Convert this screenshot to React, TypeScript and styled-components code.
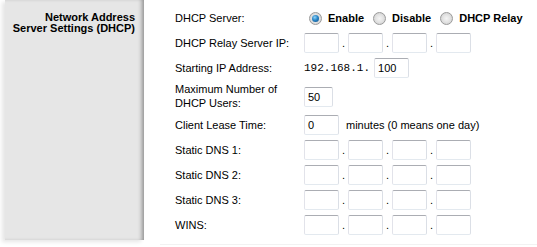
import React from "react";
import styled, { createGlobalStyle } from "styled-components";

const GlobalStyle = createGlobalStyle`
  html, body {
    margin: 0;
    padding: 0;
    background: #ffffff;
  }
  body {
    font-family: "Liberation Sans", Arial, sans-serif;
    font-size: 11px;
    color: #000;
  }
`;

const Page = styled.div`
  display: flex;
  width: 537px;
  height: 247px;
  overflow: hidden;
`;

const Sidebar = styled.div`
  width: 139px;
  margin: 0 0 7px 5px;
  background: #e6e6e6;
  box-shadow: -3px 2px 4px 0 #e6e6e6, inset -4px 0 4px -2px rgba(0, 0, 0, 0.38);
  text-align: right;
`;

const SectionTitle = styled.div`
  padding: 12px 9px 0 0;
  font-weight: bold;
  font-size: 11px;
  line-height: 11px;
`;

const Content = styled.div`
  flex: 1;
  padding-left: 16px;
`;

const Form = styled.div`
  display: grid;
  grid-template-columns: 129px 1fr;
  row-gap: 5px;
  align-items: center;
  padding: 8px 0 9px 15px;
  border-bottom: 1px solid #f2f2f2;
`;

const Label = styled.div<{ $tall?: boolean }>`
  line-height: ${(p) => (p.$tall ? "13.5px" : "20px")};
`;

const Field = styled.div`
  display: flex;
  align-items: center;
  height: ${(p: { $h?: number }) => (p.$h ? `${p.$h}px` : "20px")};
`;

const RadioGroup = styled.div`
  display: flex;
  align-items: center;
  gap: 9px;
  padding-left: 5px;
`;

const RadioOption = styled.label`
  display: flex;
  align-items: center;
  font-weight: bold;
`;

const Radio = styled.span<{ $checked?: boolean }>`
  position: relative;
  width: 13px;
  height: 13px;
  margin-right: 6px;
  box-sizing: border-box;
  border-radius: 50%;
  border: 1px solid #9a9a9a;
  background: radial-gradient(circle at 50% 50%, #f4f4f4 0, #e4e4e4 45%, #c9c9c9 100%);

  &::after {
    content: "";
    display: ${(p) => (p.$checked ? "block" : "none")};
    position: absolute;
    left: 2px;
    top: 2px;
    width: 7px;
    height: 7px;
    border-radius: 50%;
    background: radial-gradient(circle at 40% 35%, #8fd3f8 0, #2a86c7 45%, #0d4a82 100%);
  }
`;

const TextBox = styled.div<{ $w?: number }>`
  box-sizing: border-box;
  width: ${(p) => p.$w ?? 35}px;
  height: 20px;
  padding: 0 3px;
  border: 1px solid;
  border-color: #abadb3 #dbdfe6 #e3e9ef #e2e3ea;
  border-radius: 2px;
  background: #fff;
  line-height: 18px;
  font-size: 11px;
`;

const Dot = styled.span`
  width: 9px;
  height: 20px;
  line-height: 20px;
  text-align: center;
`;

const Mono = styled.span`
  font-family: "Liberation Mono", "Courier New", monospace;
  font-size: 11px;
  margin-right: 4px;
`;

const Note = styled.span`
  margin-left: 7px;
`;

const IpField: React.FC = () => (
  <Field>
    <TextBox />
    <Dot>.</Dot>
    <TextBox />
    <Dot>.</Dot>
    <TextBox />
    <Dot>.</Dot>
    <TextBox />
  </Field>
);

export default function App() {
  return (
    <Page>
      <GlobalStyle />
      <Sidebar>
        <SectionTitle>
          Network Address
          <br />
          Server Settings (DHCP)
        </SectionTitle>
      </Sidebar>
      <Content>
        <Form>
          <Label>DHCP Server:</Label>
          <Field>
            <RadioGroup>
              <RadioOption>
                <Radio $checked />
                Enable
              </RadioOption>
              <RadioOption>
                <Radio />
                Disable
              </RadioOption>
              <RadioOption>
                <Radio />
                DHCP Relay
              </RadioOption>
            </RadioGroup>
          </Field>

          <Label>DHCP Relay Server IP:</Label>
          <IpField />

          <Label>Starting IP Address:</Label>
          <Field>
            <Mono>192.168.1.</Mono>
            <TextBox>100</TextBox>
          </Field>

          <Label $tall>
            Maximum Number of
            <br />
            DHCP Users:
          </Label>
          <Field $h={27}>
            <TextBox $w={29}>50</TextBox>
          </Field>

          <Label>Client Lease Time:</Label>
          <Field>
            <TextBox>0</TextBox>
            <Note>minutes (0 means one day)</Note>
          </Field>

          <Label>Static DNS 1:</Label>
          <IpField />

          <Label>Static DNS 2:</Label>
          <IpField />

          <Label>Static DNS 3:</Label>
          <IpField />

          <Label>WINS:</Label>
          <IpField />
        </Form>
      </Content>
    </Page>
  );
}
